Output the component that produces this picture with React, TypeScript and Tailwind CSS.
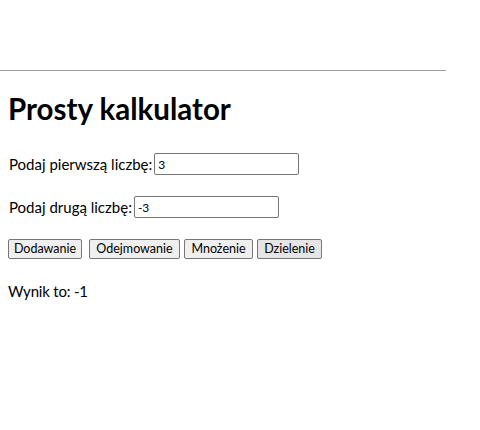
import React from "react";

export default function App() {
  return (
    <div className="w-[480px] h-[430px] bg-white text-black font-['Lato',sans-serif]">
      <div className="pt-[70px]">
        <div className="w-[446px] h-px bg-[#a0a0a0]" />
      </div>
      <h1 className="mt-[20px] ml-[8px] text-[29.5px] leading-[36px] font-bold">
        Prosty kalkulator
      </h1>
      <div className="mt-[26px] ml-[9px] flex items-center h-[22px] text-[15px]">
        <span>Podaj pierwszą liczbę:</span>
        <input
          defaultValue="3"
          className="ml-[2px] w-[145px] h-[22px] border border-[#767676] rounded-[2px] px-[3px] text-[12px] outline-none"
        />
      </div>
      <div className="mt-[21px] ml-[9px] flex items-center h-[22px] text-[15px]">
        <span>Podaj drugą liczbę:</span>
        <input
          defaultValue="-3"
          className="ml-[2px] w-[145px] h-[22px] border border-[#767676] rounded-[2px] px-[3px] text-[12px] outline-none"
        />
      </div>
      <div className="mt-[21px] ml-[8px] flex h-[20px] text-[12.5px]">
        <button className="w-[74px] h-[20px] bg-[#efefef] border border-[#767676] rounded-[2px] flex items-center justify-center">
          Dodawanie
        </button>
        <button className="ml-[7px] w-[91px] h-[20px] bg-[#efefef] border border-[#767676] rounded-[2px] flex items-center justify-center">
          Odejmowanie
        </button>
        <button className="ml-[4px] w-[69px] h-[20px] bg-[#efefef] border border-[#767676] rounded-[2px] flex items-center justify-center">
          Mnożenie
        </button>
        <button className="ml-[4px] w-[65px] h-[20px] bg-[#e5e5e5] border border-[#767676] rounded-[2px] flex items-center justify-center">
          Dzielenie
        </button>
      </div>
      <div className="mt-[22px] ml-[8px] text-[15px] leading-[20px] tracking-[-0.2px]">Wynik to: -1</div>
    </div>
  );
}
